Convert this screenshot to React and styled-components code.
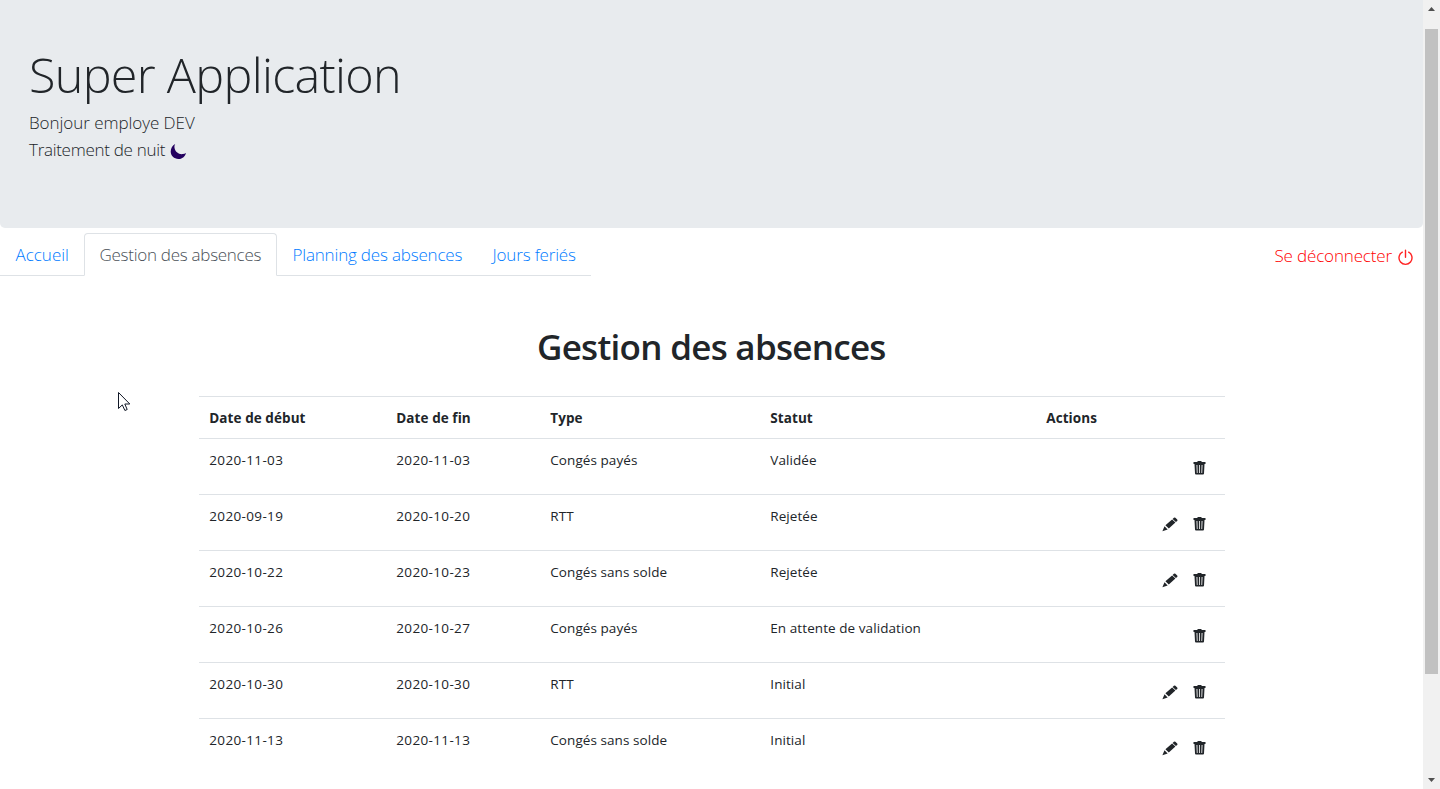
import React from "react";
import styled, { createGlobalStyle } from "styled-components";

const Global = createGlobalStyle`
  *{box-sizing:border-box}
  html,body{margin:0;height:100%;overflow:hidden;background:#fff}
  body{font-family:"Open Sans","Noto Sans",sans-serif;color:#212529}
`;
const Screen = styled.div`display:flex;height:789px;width:1440px;overflow:hidden;position:relative`;
const Page = styled.div`width:1423px;flex:none;overflow:hidden`;
const Header = styled.header`height:228px;background:#e8ebee;border-radius:0 0 5px 5px;padding:43px 29px 0`;
const Title = styled.h1`margin:0;font-weight:300;font-size:48.500px;line-height:62px;letter-spacing:-.7px;white-space:nowrap`;
const Line = styled.p`margin:0;height:27px;display:flex;align-items:center;font-weight:300;font-size:17px;letter-spacing:${p => p.$ls || 0}px;white-space:nowrap;svg{margin:3px 0 0 5px}`;
const Hello = styled.div`margin-top:4px`;
const NavBar = styled.div`display:flex;justify-content:space-between;padding-top:5px;height:48px`;
const Tabs = styled.nav`display:flex;border-bottom:1px solid #dee2e6;height:43px`;
const Tab = styled.a`height:43px;width:${p => p.$w}px;padding:0 0 0 14.500px;font-weight:300;font-size:17px;line-height:41px;white-space:nowrap;letter-spacing:${p => p.$ls || 0}px;
  border:1px solid ${p => (p.$active ? "#dee2e6" : "transparent")};border-bottom:${p => (p.$active ? "1px solid #fff" : "0")};border-radius:4px 4px 0 0;color:${p => (p.$active ? "#495057" : "#007bff")}`;
const Logout = styled.a`display:flex;align-items:center;width:148.500px;height:45px;color:#f00;font-weight:300;font-size:17px;white-space:nowrap;letter-spacing:-.16px;svg{margin:3px 0 0 5px}`;
const Heading = styled.h2`margin:49px 0 0 537px;font-weight:600;font-size:35px;line-height:44px;letter-spacing:-.72px;white-space:nowrap`;
const Table = styled.div`margin:27px 0 0 199px;width:1026px`;
const Row = styled.div`display:grid;grid-template-columns:187px 154px 220px 276px 1fr;height:${p => (p.$head ? 42 : 56)}px;border-top:1px solid #dee2e6;font-size:13.500px;font-weight:${p => (p.$head ? 700 : 400)}`;
const Cell = styled.div`padding:11px 0 0 10.300px;line-height:20px;white-space:nowrap;letter-spacing:${p => (p.$date ? 0.35 : 0.07)}px`;
const Actions = styled.div`display:flex;justify-content:flex-end;gap:15px;padding:22px 19px 0 0`;
const Scroll = styled.div`width:17px;height:789px;background:#f1f1f1;display:flex;flex-direction:column;align-items:center;padding:7px 0 7px;justify-content:space-between`;
const Thumb = styled.div`width:13px;height:645px;background:#c1c1c1;margin-bottom:86px`;
const Cursor = styled.svg`position:absolute;left:117px;top:391px`;

const Moon = () => <svg width="17" height="17" viewBox="0 0 17 17"><path d="M5.2.9C4.5 2.1 4.3 3.3 4.5 4.8c.5 4 4.2 6.800 8.300 6.300 1.200-.15 2.300-.6 3.200-1.200C15.200 13.500 12 16 8.400 16 4.100 16 .7 12.700.7 8.600.7 5 2.500 2.200 5.200.9z" fill="#23005f" /></svg>;
const Power = () => <svg width="17" height="17" viewBox="0 0 17 17" fill="none" stroke="#f22" strokeWidth="1.400" strokeLinecap="round"><path d="M8.500 1.300v7M5.300 3.200a6.500 6.500 0 1 0 6.400 0" /></svg>;
const Trash = () => <svg width="13" height="14" viewBox="0 0 13 14" fill="#212529"><path fillRule="evenodd" d="M4.500 0h4v1H12.500v2H.5V1h4zM1.500 3h10l-.5 9.500a1 1 0 0 1-1 1H3a1 1 0 0 1-1-1zM3.500 4l.3 8h.8L4.400 4zM6.100 4v8h.8V4zM8.600 4l-.2 8h.8l.3-8z" /></svg>;
const Pencil = () => <svg width="16" height="15" viewBox="0 0 16 15" fill="#212529"><path d="M11.900.7a1.200 1.200 0 0 1 1.500 0l1.800 1.800a1 1 0 0 1 0 1.400l-1.300 1.200-3.300-3.200zM10.100 2.400l3.300 3.200-6.600 6-3.400-3.300zM2.500 9.200l3.200 3.200L.4 14.300z" /></svg>;

const rows = [
  ["2020-11-03", "2020-11-03", "Congés payés", "Validée", false],
  ["2020-09-19", "2020-10-20", "RTT", "Rejetée", true],
  ["2020-10-22", "2020-10-23", "Congés sans solde", "Rejetée", true],
  ["2020-10-26", "2020-10-27", "Congés payés", "En attente de validation", false],
  ["2020-10-30", "2020-10-30", "RTT", "Initial", true],
  ["2020-11-13", "2020-11-13", "Congés sans solde", "Initial", true],
];

export default function App() {
  return (
    <Screen>
      <Global />
      <Page>
        <Header>
          <Title>Super Application</Title>
          <Hello>
            <Line $ls={-0.05}>Bonjour employe DEV</Line>
            <Line $ls={-0.29}>Traitement de nuit<Moon /></Line>
          </Hello>
        </Header>
        <NavBar>
          <Tabs>
            <Tab $w={84}>Accueil</Tab>
            <Tab $w={193} $ls={-0.27} $active>Gestion des absences</Tab>
            <Tab $w={200} $ls={-0.18}>Planning des absences</Tab>
            <Tab $w={114} $ls={-0.17}>Jours feriés</Tab>
          </Tabs>
          <Logout>Se déconnecter<Power /></Logout>
        </NavBar>
        <Heading>Gestion des absences</Heading>
        <Table>
          <Row $head>{["Date de début", "Date de fin", "Type", "Statut", "Actions"].map(t => <Cell key={t}>{t}</Cell>)}</Row>
          {rows.map((r, i) => (
            <Row key={i}>
              {r.slice(0, 4).map((t, j) => <Cell key={j} $date={j < 2}>{t}</Cell>)}
              <Actions>{r[4] && <Pencil />}<Trash /></Actions>
            </Row>
          ))}
        </Table>
      </Page>
      <Scroll>
        <svg width="7" height="4" viewBox="0 0 7 4"><path d="M3.500 0L7 4H0z" fill="#505050" /></svg>
        <Thumb />
        <svg width="7" height="4" viewBox="0 0 7 4"><path d="M0 0h7L3.500 4z" fill="#505050" /></svg>
      </Scroll>
      <Cursor width="14" height="22" viewBox="0 0 14 22"><path d="M1.500 1.500v16l3.800-3.600 2.600 5.600 2.300-1-2.400-5.500h5z" fill="#fff" stroke="#111827" /></Cursor>
    </Screen>
  );
}
